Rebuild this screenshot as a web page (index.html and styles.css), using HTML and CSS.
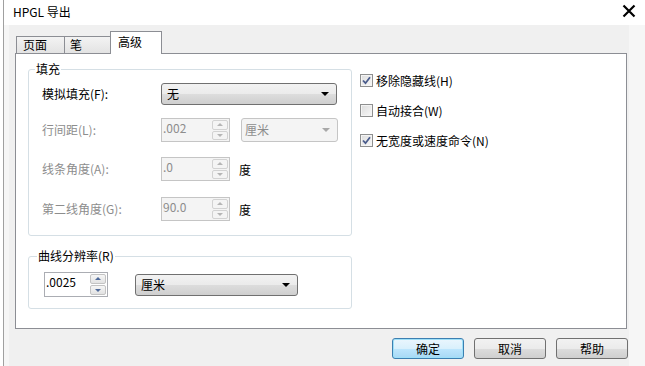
FILE: index.html
```html
<!DOCTYPE html>
<html lang="zh">
<head>
    <meta charset="UTF-8">
    <title>HPGL 导出</title>
    <link rel="stylesheet" href="styles.css">
</head>
<body>
    <div class="window">
        <div class="titlebar">
            <span class="title">HPGL 导出</span>
            <svg class="close" width="14" height="14" viewBox="0 0 14 14">
                <path d="M1.5 1.5 L12.5 12.5 M12.5 1.5 L1.5 12.5" stroke="#000" stroke-width="2.2" fill="none"/>
            </svg>
        </div>

        <div class="client">
            <div class="tabs">
                <div class="tab tab-page">页面</div>
                <div class="tab tab-pen">笔</div>
                <div class="tab active">高级</div>
            </div>

            <div class="panel">
                <div class="col-left">
                    <fieldset class="group group-fill">
                        <legend>填充</legend>

                        <div class="row row-first">
                            <span class="label">模拟填充(F):</span>
                            <div class="combo combo-fill">
                                <span>无</span>
                                <span class="arrow"></span>
                            </div>
                        </div>

                        <div class="row row-2">
                            <span class="label disabled">行间距(L):</span>
                            <div class="spin disabled">
                                <span class="val">.002</span>
                                <div class="spin-btns">
                                    <span class="sb up"></span>
                                    <span class="sb down"></span>
                                </div>
                            </div>
                            <div class="combo combo-unit disabled">
                                <span>厘米</span>
                                <span class="arrow"></span>
                            </div>
                        </div>

                        <div class="row row-3">
                            <span class="label disabled">线条角度(A):</span>
                            <div class="spin disabled">
                                <span class="val">.0</span>
                                <div class="spin-btns">
                                    <span class="sb up"></span>
                                    <span class="sb down"></span>
                                </div>
                            </div>
                            <span class="unit">度</span>
                        </div>

                        <div class="row row-4">
                            <span class="label disabled">第二线角度(G):</span>
                            <div class="spin disabled">
                                <span class="val">90.0</span>
                                <div class="spin-btns">
                                    <span class="sb up"></span>
                                    <span class="sb down"></span>
                                </div>
                            </div>
                            <span class="unit">度</span>
                        </div>
                    </fieldset>

                    <fieldset class="group group-curve">
                        <legend>曲线分辨率(R)</legend>
                        <div class="row">
                            <div class="spin spin-curve">
                                <span class="val">.0025</span>
                                <div class="spin-btns">
                                    <span class="sb up"></span>
                                    <span class="sb down"></span>
                                </div>
                            </div>
                            <div class="combo combo-curve">
                                <span>厘米</span>
                                <span class="arrow"></span>
                            </div>
                        </div>
                    </fieldset>
                </div>

                <div class="col-right">
                    <div class="check">
                        <span class="box checked">
                            <svg width="9" height="9" viewBox="0 0 9 9"><path d="M1 4.5 L3.5 7.2 L8 1.2" stroke="#4a5c8c" stroke-width="1.8" fill="none"/></svg>
                        </span>
                        <span>移除隐藏线(H)</span>
                    </div>
                    <div class="check">
                        <span class="box"></span>
                        <span>自动接合(W)</span>
                    </div>
                    <div class="check">
                        <span class="box checked">
                            <svg width="9" height="9" viewBox="0 0 9 9"><path d="M1 4.5 L3.5 7.2 L8 1.2" stroke="#4a5c8c" stroke-width="1.8" fill="none"/></svg>
                        </span>
                        <span>无宽度或速度命令(N)</span>
                    </div>
                </div>
            </div>

            <div class="buttons">
                <button class="btn default">确定</button>
                <button class="btn">取消</button>
                <button class="btn">帮助</button>
            </div>
        </div>
    </div>
</body>
</html>
```

FILE: styles.css
```css
/* dialog base */
body {
    margin: 0;
    background-color: #fff;
    font-family: "Noto Sans CJK SC", "Noto Sans", sans-serif;
    font-size: 12px;
    color: #000;
}

.window {
    margin-left: 3px;
    border-left: 1px solid #a0a0a0;
    height: 366px;
    background-color: #f6f6f6;
}

.titlebar {
    height: 25px;
    display: flex;
    align-items: center;
    justify-content: space-between;
    padding-left: 9px;
    padding-right: 9px;
    background-color: #fff;
}

.title {
    font-size: 12px;
    line-height: 16px;
    margin-top: -2px;
}

.close {
    margin-top: -3px;
}

.client {
    margin-left: 5px;
    width: 614px;
    height: 335px;
    padding: 6px 0 0 6px;
    background-color: #f0f0f0;
}

/* tabs */
.tabs {
    display: flex;
    align-items: flex-end;
    height: 22px;
    padding-left: 1px;
}

.tab {
    box-sizing: border-box;
    height: 17px;
    line-height: 15px;
    padding-left: 6px;
    border: 1px solid #8c8e94;
    border-bottom: none;
    background: linear-gradient(#f3f3f3, #e3e3e3);
}

.tab-page {
    width: 49px;
}

.tab-pen {
    width: 47px;
    margin-left: -1px;
    padding-left: 5px;
}

.tab.active {
    position: relative;
    z-index: 1;
    width: 52px;
    height: 23px;
    margin-bottom: -1px;
    margin-left: -1px;
    padding-left: 7px;
    line-height: 20px;
    background: #fff;
}

.panel {
    box-sizing: border-box;
    width: 612px;
    height: 276px;
    border: 1px solid #8c8e94;
    background-color: #fff;
    display: flex;
    padding: 7px 0 0 12px;
}

/* group boxes */
.col-left {
    width: 324px;
}

.group {
    box-sizing: border-box;
    width: 324px;
    margin: 0;
    padding: 0 0 0 13px;
    border: 1px solid #d5dfe5;
    border-radius: 3px;
}

.group legend {
    margin-left: -7px;
    padding: 0 1px;
    line-height: 16px;
}

.group-fill {
    height: 175px;
}

.group-curve {
    height: 61px;
    margin-top: 12px;
    padding-left: 15px;
}

.row {
    display: flex;
    align-items: center;
}

.row-first {
    margin-top: 6px;
    height: 22px;
}

.row-2 {
    margin-top: 13px;
}

.row-3 {
    margin-top: 15px;
}

.row-4 {
    margin-top: 16px;
}

.group-curve .row {
    margin-top: 8px;
}

.label {
    width: 119px;
    line-height: 16px;
}

.disabled {
    color: #8d8d8d;
}

.unit {
    margin-left: 9px;
}

/* spin box */
.spin {
    box-sizing: border-box;
    width: 69px;
    height: 24px;
    display: flex;
    border: 1px solid #abadb3;
    background-color: #fff;
}

.spin.disabled {
    border-color: #c5c5c5;
    background-color: #f4f4f4;
}

.spin .val {
    flex: 1;
    padding-left: 1px;
    line-height: 18px;
}

.spin-curve {
    width: 64px;
    height: 25px;
    color: #000;
}

.spin-btns {
    width: 16px;
    display: flex;
    flex-direction: column;
    padding: 1px 1px 1px 0;
    gap: 1px;
}

.sb {
    flex: 1;
    position: relative;
    border: 1px solid #c3c3c3;
    border-radius: 2px;
    background: linear-gradient(#f6f6f6, #e2e2e2);
}

.sb::after {
    content: "";
    position: absolute;
    left: 50%;
    top: 50%;
    margin-left: -3px;
    border-left: 3px solid transparent;
    border-right: 3px solid transparent;
}

.sb.up::after {
    margin-top: -2px;
    border-bottom: 3px solid #4f6a9a;
}

.sb.down::after {
    margin-top: -1px;
    border-top: 3px solid #4f6a9a;
}

.spin.disabled .sb {
    border-color: #d2d2d2;
    background: #f4f4f4;
}

.spin.disabled .sb.up::after {
    border-bottom-color: #b5b5b5;
}

.spin.disabled .sb.down::after {
    border-top-color: #b5b5b5;
}

/* combo box */
.combo {
    box-sizing: border-box;
    height: 22px;
    display: flex;
    align-items: center;
    justify-content: space-between;
    padding: 0 7px 0 5px;
    border: 1px solid #707070;
    border-radius: 3px;
    background: linear-gradient(#f2f2f2, #ebebeb 50%, #dddddd 50%, #cfcfcf);
    line-height: 16px;
}

.combo .arrow {
    border-left: 4px solid transparent;
    border-right: 4px solid transparent;
    border-top: 4px solid #000;
}

.combo-fill {
    width: 176px;
}

.combo-unit {
    width: 97px;
    height: 24px;
    margin-left: 11px;
    padding-left: 3px;
    border-color: #c5c5c5;
    background: #f4f4f4;
}

.combo-unit .arrow {
    border-top-color: #a8a8a8;
}

.combo-curve {
    width: 163px;
    margin-left: 27px;
}

/* checkboxes */
.col-right {
    margin-left: 8px;
    padding-top: 12px;
}

.check {
    display: flex;
    align-items: center;
    height: 15px;
    margin-bottom: 15px;
    line-height: 16px;
}

.box {
    box-sizing: border-box;
    width: 13px;
    height: 13px;
    margin-right: 3px;
    border: 1px solid #8e8f8f;
    background: linear-gradient(135deg, #dcdcdc, #f8f8f8);
    box-shadow: inset 0 0 0 1px #f4f4f4;
    display: flex;
    align-items: center;
    justify-content: center;
}

/* bottom buttons */
.buttons {
    display: flex;
    justify-content: flex-end;
    gap: 10px;
    width: 613px;
    margin-top: 9px;
}

.btn {
    width: 72px;
    height: 21px;
    padding: 0;
    border: 1px solid #707070;
    border-radius: 3px;
    background: linear-gradient(#f2f2f2, #ebebeb 50%, #dddddd 50%, #cfcfcf);
    font-family: inherit;
    font-size: 12px;
    line-height: 16px;
    color: #000;
}

.btn.default {
    border-color: #3c7fb1;
    background: linear-gradient(#eaf6fd, #d9f0fc 50%, #bee6fd 50%, #a7d9f5);
    box-shadow: inset 0 0 0 1px #9ee0f8;
}
```
